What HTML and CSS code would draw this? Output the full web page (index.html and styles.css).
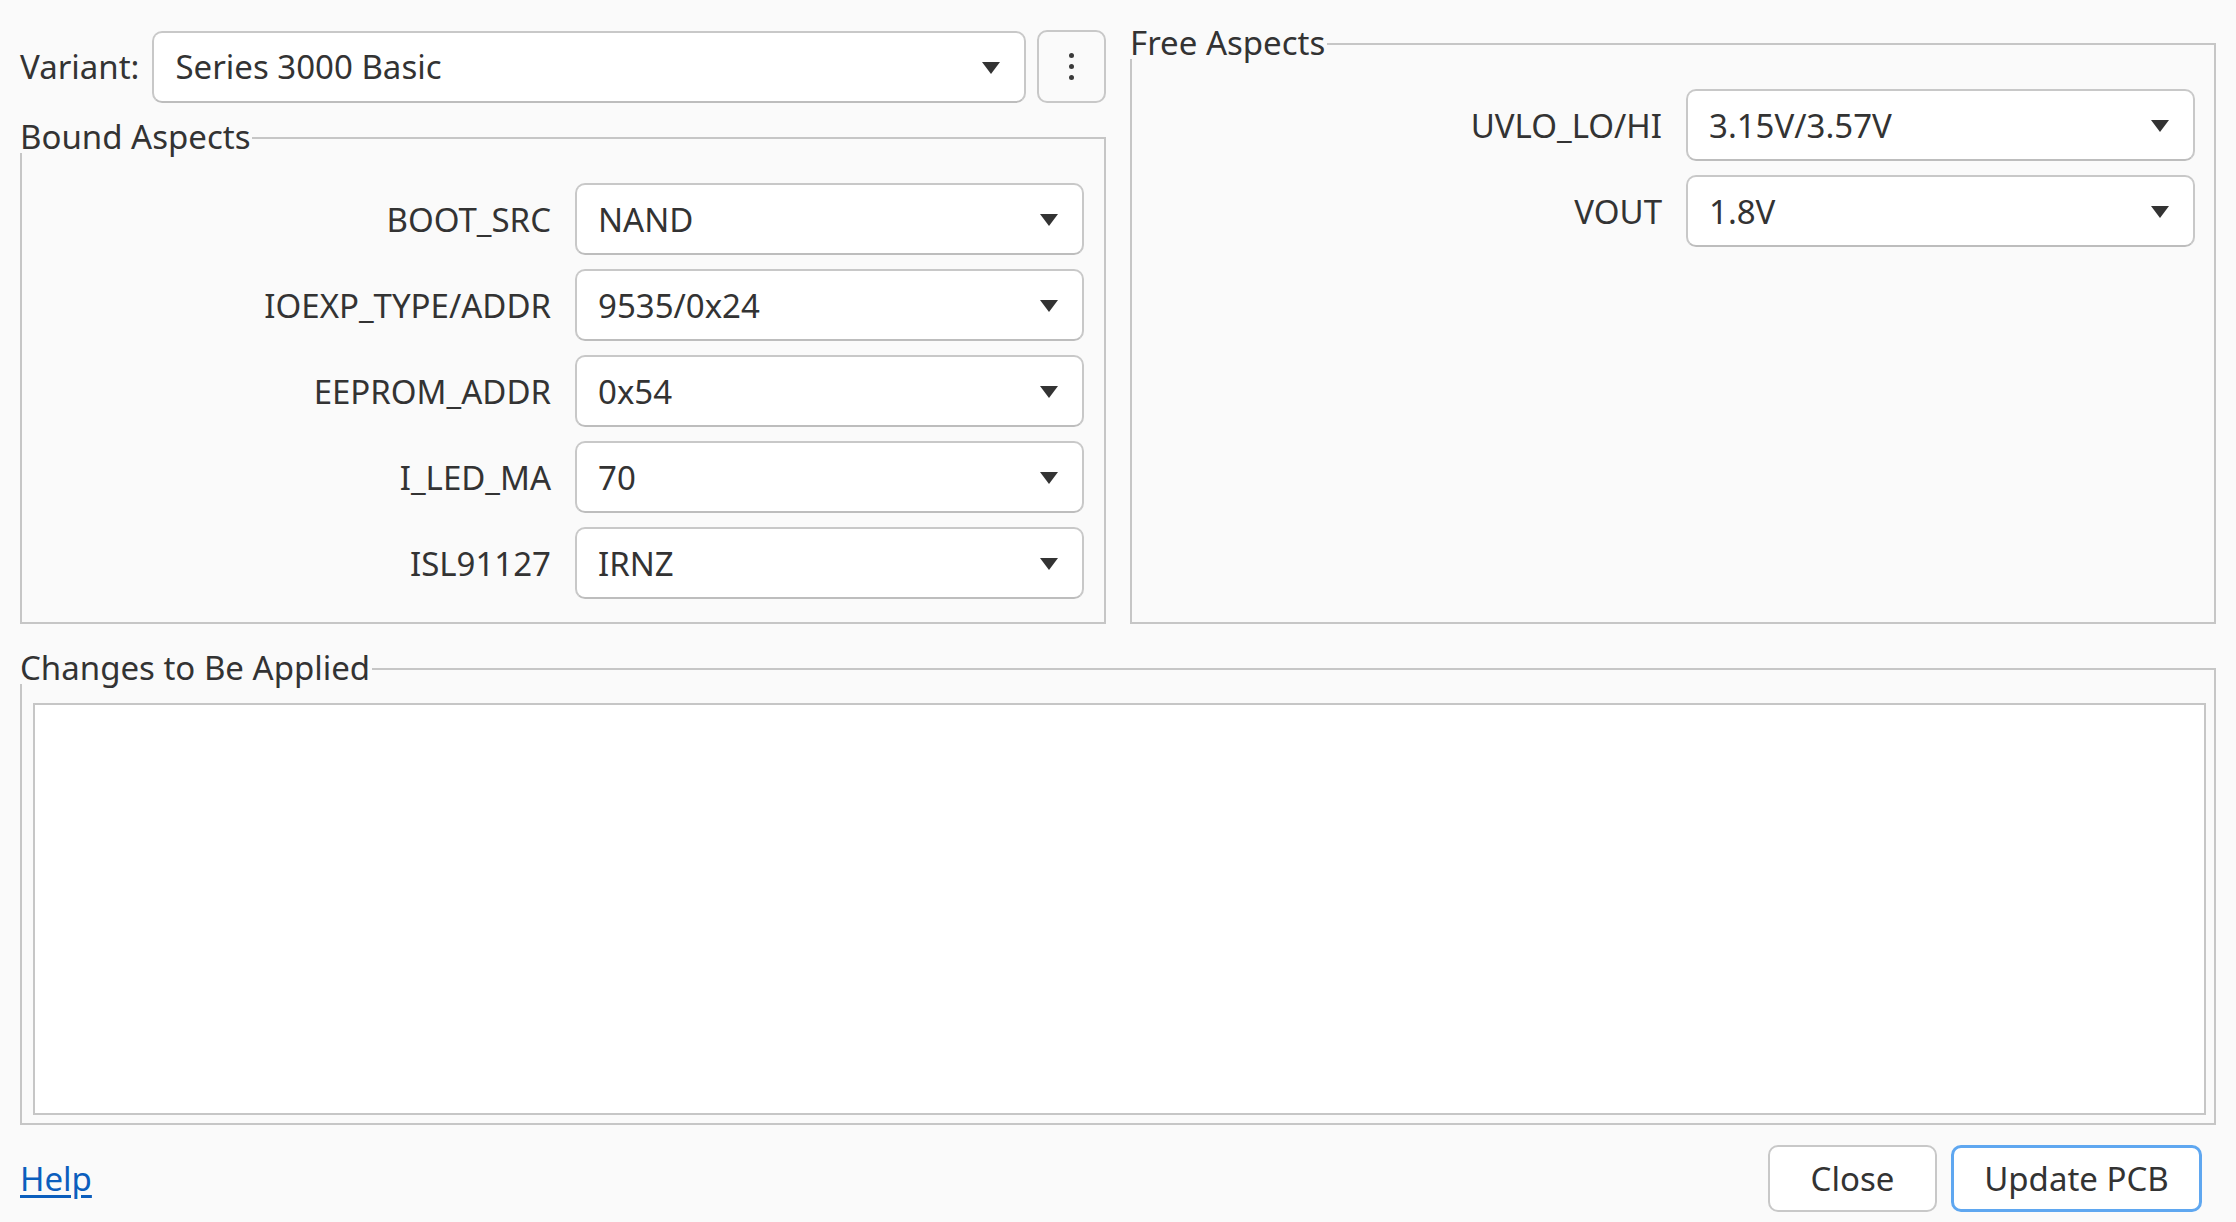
FILE: index.html
```html
<!DOCTYPE html>
<html>
<head>
<meta charset="utf-8">
<link rel="stylesheet" href="styles.css">
</head>
<body>
<div class="dialog">
  <div class="top">
    <div class="left-col">
      <div class="variant-row">
        <span class="variant-label">Variant:</span>
        <div class="combo variant-combo"><span class="combo-text">Series 3000 Basic</span><span class="arrow"></span></div>
        <div class="kebab"><span class="dot"></span><span class="dot"></span><span class="dot"></span></div>
      </div>
      <div class="group bound">
        <span class="group-title">Bound Aspects</span>
        <div class="form">
          <span class="label">BOOT_SRC</span>
          <div class="combo"><span class="combo-text">NAND</span><span class="arrow"></span></div>
          <span class="label">IOEXP_TYPE/ADDR</span>
          <div class="combo"><span class="combo-text">9535/0x24</span><span class="arrow"></span></div>
          <span class="label">EEPROM_ADDR</span>
          <div class="combo"><span class="combo-text">0x54</span><span class="arrow"></span></div>
          <span class="label">I_LED_MA</span>
          <div class="combo"><span class="combo-text">70</span><span class="arrow"></span></div>
          <span class="label">ISL91127</span>
          <div class="combo"><span class="combo-text">IRNZ</span><span class="arrow"></span></div>
        </div>
      </div>
    </div>
    <div class="group free">
      <span class="group-title">Free Aspects</span>
      <div class="form">
        <span class="label">UVLO_LO/HI</span>
        <div class="combo"><span class="combo-text">3.15V/3.57V</span><span class="arrow"></span></div>
        <span class="label">VOUT</span>
        <div class="combo"><span class="combo-text">1.8V</span><span class="arrow"></span></div>
      </div>
    </div>
  </div>
  <div class="group changes">
    <span class="group-title">Changes to Be Applied</span>
    <div class="changes-box"></div>
  </div>
  <div class="footer">
    <a class="help" href="#">Help</a>
    <div class="buttons">
      <button class="btn">Close</button>
      <button class="btn primary">Update PCB</button>
    </div>
  </div>
</div>
</body>
</html>
```

FILE: styles.css
```css
html, body {
  margin: 0;
  padding: 0;
  background: #fafafa;
}
* {
  box-sizing: border-box;
}
body {
  font-family: "Noto Sans", "Open Sans", sans-serif;
  font-size: 33px;
  color: #333333;
  width: 2236px;
  height: 1222px;
  overflow: hidden;
}
.dialog {
  padding: 30px 20px 0 20px;
  display: flex;
  flex-direction: column;
}
.top {
  display: grid;
  grid-template-columns: 1fr 1fr;
  column-gap: 24px;
  align-items: stretch;
}
.left-col {
  min-width: 0;
  display: flex;
  flex-direction: column;
}
.variant-row {
  display: flex;
  align-items: center;
  height: 73px;
}
.variant-label {
  margin-right: 13px;
}
.variant-combo {
  flex: 1;
}
.kebab {
  width: 69px;
  height: 73px;
  margin-left: 11px;
  border: 2px solid #c8c8c8;
  border-radius: 10px;
  background: #fafafa;
  display: flex;
  flex-direction: column;
  align-items: center;
  justify-content: center;
  gap: 6px;
}
.dot {
  width: 5px;
  height: 5px;
  border-radius: 50%;
  background: #3a3a3a;
}
.combo {
  height: 72px;
  border: 2px solid #c8c8c8;
  border-bottom-color: #bdbdbd;
  border-radius: 10px;
  background: #ffffff;
  display: flex;
  align-items: center;
  padding: 0 24px 0 21px;
}
.combo-text {
  flex: 1;
  white-space: nowrap;
}
.arrow {
  width: 0;
  height: 0;
  border-left: 9px solid transparent;
  border-right: 9px solid transparent;
  border-top: 12px solid #333333;
  margin-top: 2px;
}
.group {
  position: relative;
  border: 2px solid #c6c6c6;
}
.group-title {
  position: absolute;
  left: -2px;
  top: -18px;
  line-height: 32px;
  background: #fafafa;
  padding-right: 2px;
  white-space: nowrap;
}
.bound {
  margin-top: 34px;
  padding: 44px 20px 23px 0;
}
.free {
  margin-top: 13px;
  padding: 44px 19px 23px 0;
}
.form {
  display: grid;
  grid-template-columns: 1fr 509px;
  column-gap: 24px;
  row-gap: 14px;
  align-items: center;
}
.label {
  text-align: right;
  white-space: nowrap;
}
.changes {
  margin-top: 44px;
  padding: 33px 8px 8px 11px;
}
.changes-box {
  height: 412px;
  background: #ffffff;
  border: 2px solid #c6c6c6;
}
.footer {
  display: flex;
  align-items: center;
  justify-content: space-between;
  margin-top: 20px;
  padding-right: 14px;
}
.help {
  color: #0b5ebd;
  text-decoration: underline;
  text-underline-offset: 4px;
}
.buttons {
  display: flex;
  gap: 14px;
}
.btn {
  font-family: inherit;
  font-size: 33px;
  color: #333333;
  background: #ffffff;
  height: 67px;
  border: 2px solid #c8c8c8;
  border-radius: 10px;
  padding: 0;
  width: 169px;
}
.btn.primary {
  width: 251px;
  border: 3px solid #5fa7f0;
}
```
